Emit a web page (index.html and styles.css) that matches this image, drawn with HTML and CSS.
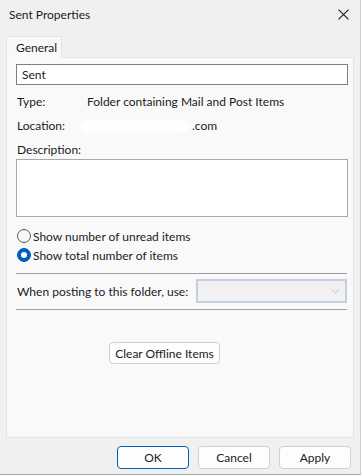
FILE: index.html
```html
<!DOCTYPE html>
<html lang="en">
<head>
    <meta charset="UTF-8">
    <title>Sent Properties</title>
    <link rel="stylesheet" href="styles.css">
</head>
<body>
    <div class="dialog">
        <div class="titlebar">
            <span class="title">Sent Properties</span>
            <svg class="close" viewBox="0 0 10 10" width="11" height="11">
                <path d="M0.5 0.5L9.5 9.5M9.5 0.5L0.5 9.5" stroke="#1a1a1a" stroke-width="1"/>
            </svg>
        </div>

        <div class="tabs">
            <div class="tab">General</div>
        </div>

        <div class="panel">
            <div class="name-box">Sent</div>

            <div class="info-row first">
                <span class="info-label">Type:</span>
                <span class="info-value">Folder containing Mail and Post Items</span>
            </div>
            <div class="info-row">
                <span class="info-label">Location:</span>
                <span class="info-value location"><span class="blur"></span>.com</span>
            </div>

            <div class="desc-label">Description:</div>
            <div class="desc-box"></div>

            <label class="radio-row first">
                <span class="radio"></span>
                Show number of unread items
            </label>
            <label class="radio-row">
                <span class="radio checked"></span>
                Show total number of items
            </label>

            <div class="divider"></div>

            <div class="post-row">
                <span>When posting to this folder, use:</span>
                <div class="select">
                    <svg viewBox="0 0 10 6" width="9" height="5">
                        <path d="M0.5 0.5L5 5L9.5 0.5" fill="none" stroke="#b8b8b8" stroke-width="1"/>
                    </svg>
                </div>
            </div>

            <div class="divider second"></div>

            <div class="clear-wrap">
                <button class="btn clear">Clear Offline Items</button>
            </div>
        </div>

        <div class="footer">
            <button class="btn action primary">OK</button>
            <button class="btn action">Cancel</button>
            <button class="btn action">Apply</button>
        </div>
    </div>
</body>
</html>
```

FILE: styles.css
```css
:root {
    --bg-dialog: #f0f0f0;
    --bg-panel: #f9f9f9;
    --border-light: #e3e3e3;
    --border-input: #7f7f7f;
    --accent: #005fb8;
    --text: #1b1b1b;
}

* {
    margin: 0;
    padding: 0;
    box-sizing: border-box;
}

body {
    font-family: Lato, "Noto Sans", sans-serif;
    font-size: 12px;
    color: var(--text);
    background-color: #ffffff;
}

.dialog {
    width: 361px;
    height: 475px;
    background-color: var(--bg-dialog);
    border-right: 1px solid #cfcfcf;
    border-bottom: 1px solid #a8a8a8;
    display: flex;
    flex-direction: column;
}

.titlebar {
    height: 28px;
    display: flex;
    align-items: center;
    justify-content: space-between;
    padding: 0 11px 0 9px;
}

.title {
    font-size: 12px;
}

.tabs {
    margin-top: 8px;
    padding-left: 6px;
    display: flex;
}

.tab {
    width: 56px;
    height: 22px;
    margin-bottom: -1px;
    background-color: var(--bg-panel);
    border: 1px solid var(--border-light);
    border-bottom: none;
    padding: 3px 0 0 9px;
    position: relative;
}

.panel {
    margin-left: 6px;
    width: 348px;
    height: 381px;
    background-color: var(--bg-panel);
    border: 1px solid var(--border-light);
    padding: 6px 5px 0 9px;
}

.name-box {
    height: 21px;
    background-color: #ffffff;
    border: 1px solid var(--border-input);
    padding: 2px 0 0 5px;
    line-height: 15px;
}

.info-row {
    display: flex;
    height: 16px;
    line-height: 16px;
    margin-top: 8px;
    padding-left: 1px;
}

.info-row.first {
    margin-top: 9px;
}

.info-label {
    width: 70px;
}

.location {
    display: flex;
    align-items: center;
    margin-left: -7px;
}

.blur {
    display: inline-block;
    width: 108px;
    height: 13px;
    margin-right: 4px;
    background-color: #ffffff;
    border-radius: 7px;
    filter: blur(1.5px);
}

.desc-label {
    height: 16px;
    line-height: 16px;
    margin-top: 8px;
    padding-left: 1px;
}

.desc-box {
    height: 58px;
    margin-top: 1px;
    background-color: #ffffff;
    border: 1px solid #a9a9a9;
}

.radio-row {
    display: flex;
    align-items: center;
    gap: 2px;
    height: 16px;
    margin-top: 3px;
    padding-left: 1px;
}

.radio-row.first {
    margin-top: 11px;
}

.radio {
    width: 14px;
    height: 14px;
    border-radius: 50%;
    border: 1px solid #5c5c5c;
    background-color: #f7f7f7;
    position: relative;
}

.radio.checked {
    background-color: var(--accent);
    border-color: var(--accent);
}

.radio.checked::after {
    content: "";
    position: absolute;
    left: 3px;
    top: 3px;
    width: 6px;
    height: 6px;
    border-radius: 50%;
    background-color: #ffffff;
}

.divider {
    height: 1px;
    background-color: #a0a0a0;
    margin-top: 10px;
    margin-right: 1px;
}

.divider.second {
    margin-top: 6px;
}

.post-row {
    display: flex;
    align-items: center;
    justify-content: space-between;
    margin-top: 5px;
    padding-left: 1px;
    margin-right: 1px;
}

.select {
    width: 151px;
    height: 24px;
    background-color: #f1f1f1;
    border: 2px solid #c3cede;
    display: flex;
    align-items: center;
    justify-content: flex-end;
    padding-right: 5px;
}

.clear-wrap {
    margin-top: 32px;
    padding-left: 93px;
}

.btn {
    font-family: inherit;
    font-size: 12px;
    color: var(--text);
    background-color: #fdfdfd;
    border: 1px solid #d0d0d0;
    border-radius: 4px;
}

.clear {
    width: 111px;
    height: 22px;
}

.footer {
    display: flex;
    gap: 9px;
    justify-content: flex-end;
    padding-right: 9px;
    margin-top: 8px;
}

.action {
    width: 72px;
    height: 23px;
}

.primary {
    border-color: var(--accent);
}
```
